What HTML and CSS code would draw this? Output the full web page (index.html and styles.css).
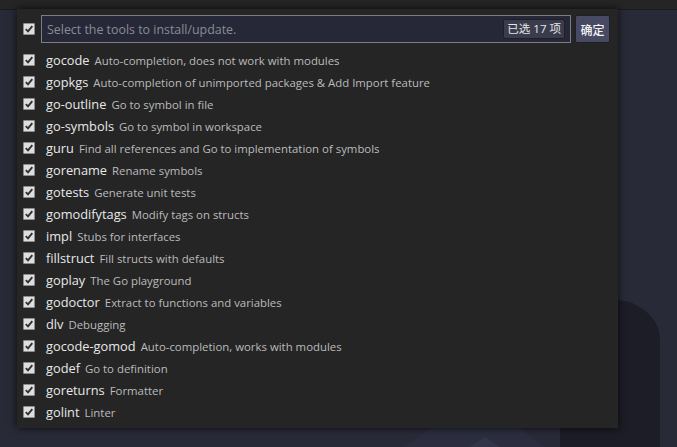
FILE: index.html
```html
<!DOCTYPE html>
<html>
<head>
<meta charset="utf-8">
<link rel="stylesheet" href="styles.css">
</head>
<body>
<div class="topbar"></div>
<svg class="backdrop" width="677" height="437" viewBox="0 0 677 437">
  <path d="M560 280 L630 292 Q660 305 660 330 L660 437 L560 437 Z" fill="#1c1d26"/>
  <path d="M405 437 L430 418 L520 418 L545 437 Z" fill="#30324a" opacity="0.5"/>
  <path d="M470 437 L485 427 L500 437 Z" fill="#333548"/>
</svg>
<div class="panel">
  <div class="header">
    <span class="cb"></span>
    <div class="input">
      <span class="placeholder">Select the tools to install/update.</span>
      <span class="badge">已选 17 项</span>
    </div>
    <button class="ok">确定</button>
  </div>
  <ul class="list">
    <li><span class="cb"></span><span class="name">gocode</span><span class="desc">Auto-completion, does not work with modules</span></li>
    <li><span class="cb"></span><span class="name">gopkgs</span><span class="desc">Auto-completion of unimported packages &amp; Add Import feature</span></li>
    <li><span class="cb"></span><span class="name">go-outline</span><span class="desc">Go to symbol in file</span></li>
    <li><span class="cb"></span><span class="name">go-symbols</span><span class="desc">Go to symbol in workspace</span></li>
    <li><span class="cb"></span><span class="name">guru</span><span class="desc">Find all references and Go to implementation of symbols</span></li>
    <li><span class="cb"></span><span class="name">gorename</span><span class="desc">Rename symbols</span></li>
    <li><span class="cb"></span><span class="name">gotests</span><span class="desc">Generate unit tests</span></li>
    <li><span class="cb"></span><span class="name">gomodifytags</span><span class="desc">Modify tags on structs</span></li>
    <li><span class="cb"></span><span class="name">impl</span><span class="desc">Stubs for interfaces</span></li>
    <li><span class="cb"></span><span class="name">fillstruct</span><span class="desc">Fill structs with defaults</span></li>
    <li><span class="cb"></span><span class="name">goplay</span><span class="desc">The Go playground</span></li>
    <li><span class="cb"></span><span class="name">godoctor</span><span class="desc">Extract to functions and variables</span></li>
    <li><span class="cb"></span><span class="name">dlv</span><span class="desc">Debugging</span></li>
    <li><span class="cb"></span><span class="name">gocode-gomod</span><span class="desc">Auto-completion, works with modules</span></li>
    <li><span class="cb"></span><span class="name">godef</span><span class="desc">Go to definition</span></li>
    <li><span class="cb"></span><span class="name">goreturns</span><span class="desc">Formatter</span></li>
    <li><span class="cb"></span><span class="name">golint</span><span class="desc">Linter</span></li>
  </ul>
</div>
</body>
</html>
```
FILE: styles.css
```css
* { box-sizing: border-box; }
html, body { margin: 0; padding: 0; }
body {
  width: 677px;
  height: 447px;
  overflow: hidden;
  background: #282a37;
  font-family: "Open Sans", "Noto Sans CJK SC", sans-serif;
  position: relative;
}
.topbar {
  height: 10px;
  background: #252526;
  border-bottom: 1px solid #1b1b1c;
}
.backdrop {
  position: absolute;
  left: 0;
  top: 10px;
}
.panel {
  position: relative;
  margin-left: 17px;
  margin-top: -1px;
  width: 601px;
  height: 419px;
  background: #252526;
  box-shadow: 0 0 8px rgba(0,0,0,0.75);
  padding: 6px 8px 0 6px;
}
.header {
  display: flex;
  align-items: center;
  height: 28px;
}
.cb {
  flex: none;
  width: 12px;
  height: 12px;
  border: 1px solid #8e8e8e;
  border-radius: 1px;
  background: #dedede url("data:image/svg+xml;utf8,<svg xmlns='http://www.w3.org/2000/svg' width='10' height='10' viewBox='0 0 10 10'><path d='M1.8 5.2 L4 7.4 L8.3 2.2' fill='none' stroke='%23303030' stroke-width='1.9'/></svg>") center/10px 10px no-repeat;
}
.header .cb { margin-right: 6px; }
.input {
  flex: 1;
  height: 28px;
  display: flex;
  align-items: center;
  justify-content: space-between;
  border: 1px solid #7b7c86;
  background: #262837;
  padding: 0 5px 0 5px;
}
.placeholder {
  color: #8b8c94;
  font-size: 12.4px;
}
.badge {
  height: 20px;
  line-height: 18px;
  padding: 0 3px;
  font-size: 11.5px;
  color: #e6e6e6;
  background: #3a3c4e;
  border: 1px solid #1e1f29;
  border-radius: 2px;
}
.ok {
  margin-left: 4px;
  width: 35px;
  height: 28px;
  padding: 0;
  background: #474a62;
  border: 1px solid #1e1f29;
  border-radius: 2px;
  color: #f4f4f4;
  font-family: "Noto Sans CJK SC", sans-serif;
  font-weight: 500;
  font-size: 12px;
}
.list {
  list-style: none;
  margin: 6px 0 0 0;
  padding: 0;
}
.list li {
  height: 22px;
  display: flex;
  align-items: center;
  white-space: nowrap;
}
.list .cb { margin-right: 11px; }
.name {
  color: #e8e8e8;
  font-size: 12.8px;
  margin-right: 5px;
}
.desc {
  color: #bbbbbb;
  font-size: 11.4px;
}
```
